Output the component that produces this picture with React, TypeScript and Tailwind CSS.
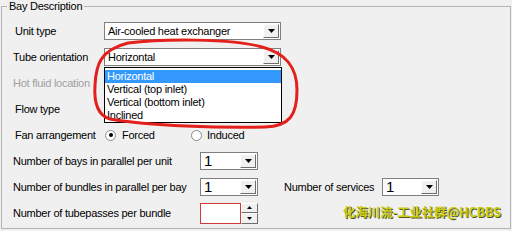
import React from 'react';

const ORIENTATIONS = ['Horizontal', 'Vertical (top inlet)', 'Vertical (bottom inlet)', 'Inclined'];

function Arrow() {
  return (
    <svg width="7" height="4" viewBox="0 0 7 4">
      <path d="M0,0 L7,0 L3.5,4 Z" fill="#000" />
    </svg>
  );
}

function DropButton() {
  return (
    <div className="w-[16px] h-full flex items-center justify-center bg-[#f0f0f0] border-t border-l border-t-white border-l-white border-r border-b border-r-[#6e6e6e] border-b-[#6e6e6e]">
      <Arrow />
    </div>
  );
}

function Combo({ value, width, big }: { value: string; width: string; big?: boolean }) {
  return (
    <div className={`${width} h-[18px] flex bg-white border border-[#7f7f7f] p-[1px]`}>
      <div className={`flex-1 flex items-center pl-[2px] ${big ? 'text-[15px] tracking-normal' : ''}`}>{value}</div>
      <DropButton />
    </div>
  );
}

function Radio({ checked }: { checked?: boolean }) {
  return (
    <div className="w-[11px] h-[11px] rounded-full bg-white border border-[#8c8c8c] flex items-center justify-center">
      {checked && <div className="w-[4px] h-[4px] rounded-full bg-black" />}
    </div>
  );
}

function Spinner() {
  return (
    <div className="w-[58px] h-[21px] flex">
      <div className="flex-1 bg-white border border-[#d23a3a]" />
      <div className="w-[17px] flex flex-col">
        {[0, 1].map((i) => (
          <div
            key={i}
            className="flex-1 flex items-center justify-center bg-[#f0f0f0] border-t border-l border-t-white border-l-white border-r border-b border-r-[#6e6e6e] border-b-[#6e6e6e]"
          >
            <svg width="5" height="3" viewBox="0 0 5 3">
              <path d={i === 0 ? 'M0,3 L5,3 L2.5,0 Z' : 'M0,0 L5,0 L2.5,3 Z'} fill="#000" />
            </svg>
          </div>
        ))}
      </div>
    </div>
  );
}

export default function App() {
  return (
    <div className="relative w-[512px] h-[231px] overflow-hidden bg-[#f0f0f0] text-black text-[11px] tracking-[-0.25px] font-['Liberation_Sans',Arial,sans-serif]">
      <div className="pt-[6px] px-[1px]">
        <div className="relative h-[223px] border border-[#b4b4b4] pt-[11px] pl-[11px]">
          <span className="absolute -top-[8px] left-[5px] px-[2px] bg-[#f0f0f0] leading-[14px]">Bay Description</span>

          <div className="flex items-center h-[26px]">
            <span className="w-[91px] pl-[2px]">Unit type</span>
            <Combo value="Air-cooled heat exchanger" width="w-[177px]" />
          </div>

          <div className="flex items-center h-[26px]">
            <span className="w-[91px]">Tube orientation</span>
            <div className="relative">
              <Combo value="Horizontal" width="w-[177px]" />
              <div className="absolute top-[19px] left-0 w-[178px] z-10 bg-white border border-black pt-[2px]">
                {ORIENTATIONS.map((o, i) => (
                  <div
                    key={o}
                    className={`h-[13px] leading-[13px] pl-[2px] ${i === 0 ? 'bg-[#3399ff] text-white' : ''}`}
                  >
                    {o}
                  </div>
                ))}
              </div>
            </div>
          </div>

          <div className="flex items-center h-[26px]">
            <span className="w-[91px] text-[#a0a0a0] whitespace-nowrap">Hot fluid location</span>
          </div>

          <div className="flex items-center h-[26px]">
            <span className="w-[91px] pl-[2px]">Flow type</span>
          </div>

          <div className="flex items-center h-[26px]">
            <span className="w-[92px] pl-[2px]">Fan arrangement</span>
            <div className="w-[86px] flex items-center gap-[6px]">
              <Radio checked />
              <span>Forced</span>
            </div>
            <div className="flex items-center gap-[5px]">
              <Radio />
              <span>Induced</span>
            </div>
          </div>

          <div className="flex items-center h-[26px]">
            <span className="w-[187px]">Number of bays in parallel per unit</span>
            <Combo value="1" width="w-[58px]" big />
          </div>

          <div className="flex items-center h-[26px]">
            <span className="w-[187px]">Number of bundles in parallel per bay</span>
            <Combo value="1" width="w-[58px]" big />
            <span className="w-[98px] ml-[26px]">Number of services</span>
            <Combo value="1" width="w-[57px]" big />
          </div>

          <div className="flex items-center h-[26px]">
            <span className="w-[187px]">Number of tubepasses per bundle</span>
            <Spinner />
          </div>
        </div>
      </div>

      <span className="absolute left-[343px] top-[203px] leading-[18px] text-[12.4px] tracking-normal font-semibold text-[#cccc10] [text-shadow:1px_1px_0_#55552a] font-['Noto_Sans_CJK_SC',sans-serif]">
        化海川流-工业社群@HCBBS
      </span>

      <svg className="absolute inset-0 pointer-events-none z-20" width="512" height="231" viewBox="0 0 512 231">
        <path
          d="M128,43 C160,39 230,38 262,47 C285,53 297,66 297,90 C297,115 290,126 265,127 C220,128 150,126 110,119 C96,115 94,100 95,85 C96,65 100,50 128,43 Z"
          fill="none"
          stroke="#e3201c"
          strokeWidth="3"
          strokeLinecap="round"
        />
      </svg>
    </div>
  );
}
